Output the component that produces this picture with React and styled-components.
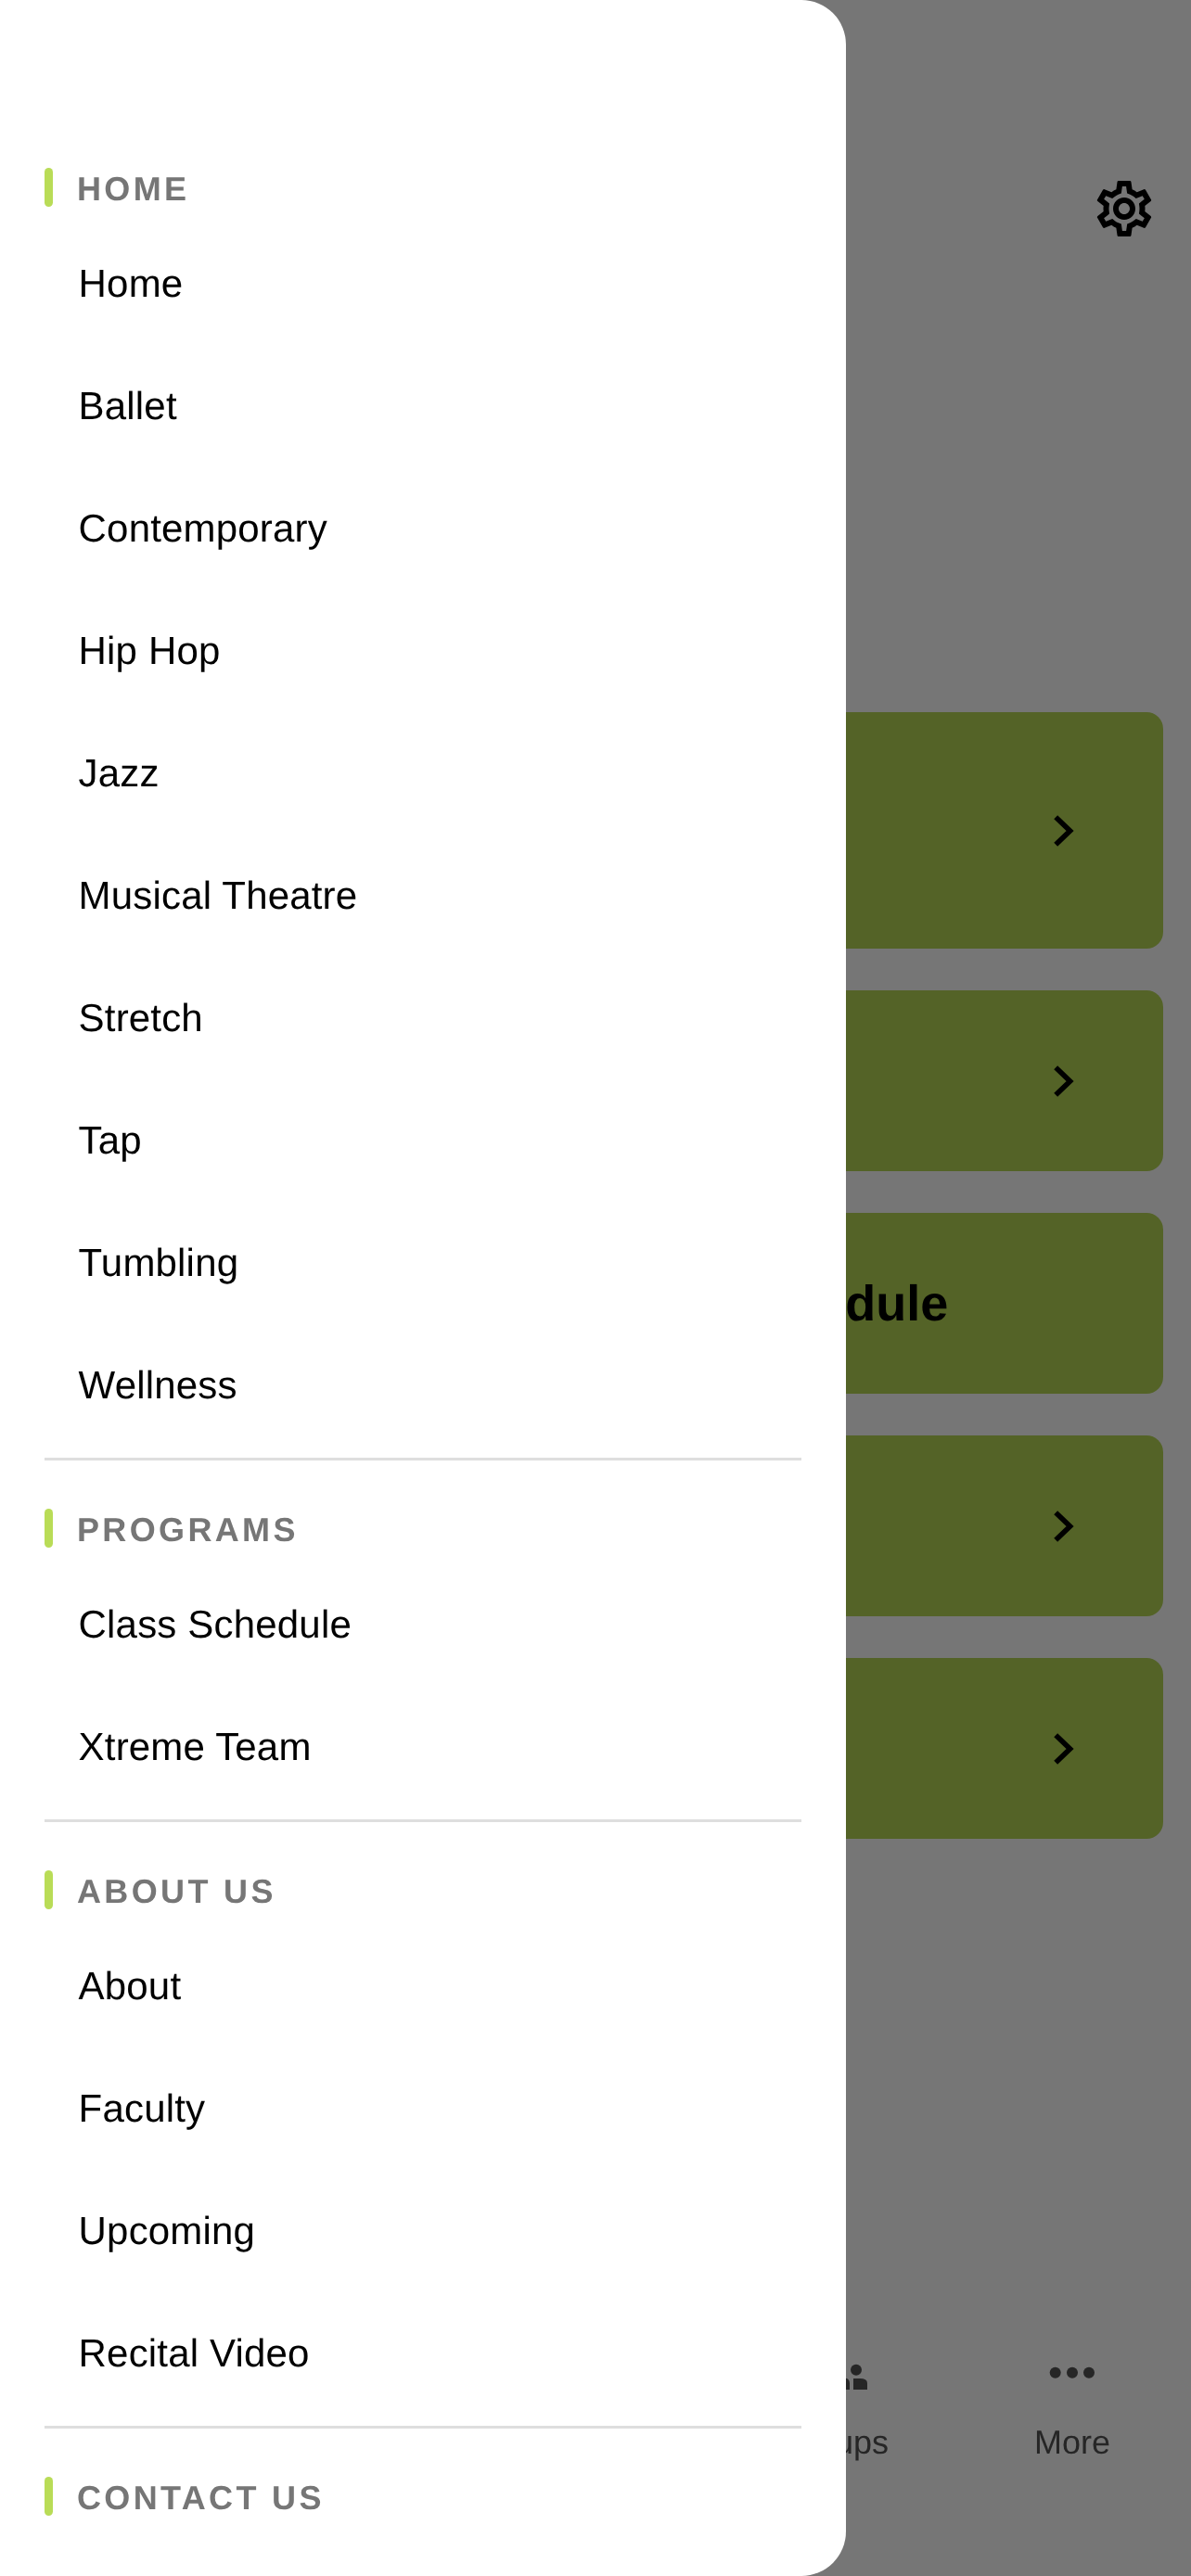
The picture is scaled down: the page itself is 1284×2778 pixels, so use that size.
import React from "react";
import styled, { createGlobalStyle } from "styled-components";
import { MdOutlineSettings } from "react-icons/md";

const Global = createGlobalStyle`
  html, body { margin: 0; padding: 0; background: #767676; }
  * { box-sizing: border-box; }
  body { font-family: "Liberation Sans", Arial, sans-serif; text-rendering: geometricPrecision; }
`;

const Screen = styled.div`
  position: relative;
  width: 1284px;
  height: 2778px;
  overflow: hidden;
  background: #767676;
  display: flex;
  flex-direction: column;
`;

const TopBar = styled.header`
  height: 768px;
  padding: 189px 36px 0 0;
  display: flex;
  justify-content: flex-end;
  align-items: flex-start;
  color: #000;
  font-size: 72px;
  line-height: 0;
`;

const CardList = styled.main`
  display: flex;
  flex-direction: column;
  gap: 45px;
  padding: 0 30px;
`;

const Card = styled.div`
  height: ${(p) => (p.$tall ? 255 : 195)}px;
  border-radius: 18px;
  background: #546327;
  display: flex;
  align-items: center;
  justify-content: flex-end;
  padding-right: ${(p) => (p.$title ? 232 : 96)}px;
  color: #000;
`;

const CardTitle = styled.span`
  font-size: 54px;
  font-weight: 700;
  line-height: 62px;
  will-change: transform;
`;

const Chevron = () => (
  <svg width="22" height="34" viewBox="0 0 22 34" fill="none" stroke="#000" strokeWidth="5.6">
    <path d="M2.2 2.2 L17.6 17 L2.2 31.8" />
  </svg>
);

const TabBar = styled.nav`
  margin-top: auto;
  height: 286px;
  display: grid;
  grid-template-columns: repeat(5, 1fr);
`;

const Tab = styled.div`
  grid-column: ${(p) => p.$col};
  padding-top: 57px;
  display: flex;
  flex-direction: column;
  align-items: center;
  color: #262626;
`;

const TabLabel = styled.span`
  margin-top: 28px;
  font-size: 36px;
  line-height: 41px;
  will-change: transform;
`;

const GroupIcon = () => (
  <svg width="72" height="36" viewBox="0 0 72 36" fill="currentColor">
    <circle cx="12" cy="6.7" r="6" />
    <circle cx="36" cy="5" r="7" />
    <circle cx="60" cy="6.7" r="6" />
    <path d="M0 28 V21 Q0 16 8 16 H15 V28 Z" />
    <path d="M19 28 V21 Q19 15 27 15 H45 Q53 15 53 21 V28 Z" />
    <path d="M57 28 V16 H64 Q72 16 72 21 V28 Z" />
  </svg>
);

const MoreIcon = () => (
  <svg width="72" height="36" viewBox="0 0 72 36" fill="currentColor">
    <circle cx="17.7" cy="9.7" r="6" />
    <circle cx="36" cy="9.7" r="6" />
    <circle cx="54" cy="9.7" r="6" />
  </svg>
);

const Drawer = styled.aside`
  position: absolute;
  left: 0;
  top: 0;
  bottom: 0;
  width: 912px;
  padding-top: 181px;
  background: #fff;
  border-radius: 0 48px 48px 0;
  overflow: hidden;
`;

const Section = styled.section`
  display: flex;
  flex-direction: column;
  will-change: transform;
`;

const SectionHeader = styled.div`
  height: 42px;
  margin-left: 48px;
  display: flex;
  align-items: center;
  gap: 26px;
`;

const Accent = styled.span`
  width: 9px;
  height: 42px;
  border-radius: 5px;
  background: #b9dc57;
`;

const SectionTitle = styled.span`
  padding-top: 3px;
  font-size: 36px;
  font-weight: 700;
  letter-spacing: 3.35px;
  line-height: 42px;
  color: #767676;
`;

const ItemList = styled.div`
  margin-top: 16px;
  display: flex;
  flex-direction: column;
`;

const Item = styled.a`
  height: 132px;
  padding-left: 84.6px;
  font-size: 42px;
  letter-spacing: 0.18px;
  line-height: 134px;
  color: #000;
`;

const Divider = styled.hr`
  height: 3px;
  margin: 13px 48px 52px;
  border: 0;
  background: #dedede;
`;

const sections = [
  { title: "HOME", items: ["Home", "Ballet", "Contemporary", "Hip Hop", "Jazz", "Musical Theatre", "Stretch", "Tap", "Tumbling", "Wellness"] },
  { title: "PROGRAMS", items: ["Class Schedule", "Xtreme Team"] },
  { title: "ABOUT US", items: ["About", "Faculty", "Upcoming", "Recital Video"] },
  { title: "CONTACT US", items: [] },
];

export default function App() {
  return (
    <Screen>
      <Global />
      <TopBar>
        <MdOutlineSettings />
      </TopBar>
      <CardList>
        <Card $tall><Chevron /></Card>
        <Card><Chevron /></Card>
        <Card $title><CardTitle>Class Schedule</CardTitle></Card>
        <Card><Chevron /></Card>
        <Card><Chevron /></Card>
      </CardList>
      <TabBar>
        <Tab $col={4}>
          <GroupIcon />
          <TabLabel>Groups</TabLabel>
        </Tab>
        <Tab $col={5}>
          <MoreIcon />
          <TabLabel>More</TabLabel>
        </Tab>
      </TabBar>
      <Drawer>
        {sections.map((s, i) => (
          <Section key={s.title}>
            <SectionHeader>
              <Accent />
              <SectionTitle>{s.title}</SectionTitle>
            </SectionHeader>
            {s.items.length > 0 && (
              <ItemList>
                {s.items.map((t) => (
                  <Item key={t}>{t}</Item>
                ))}
              </ItemList>
            )}
            {i < sections.length - 1 && <Divider />}
          </Section>
        ))}
      </Drawer>
    </Screen>
  );
}
